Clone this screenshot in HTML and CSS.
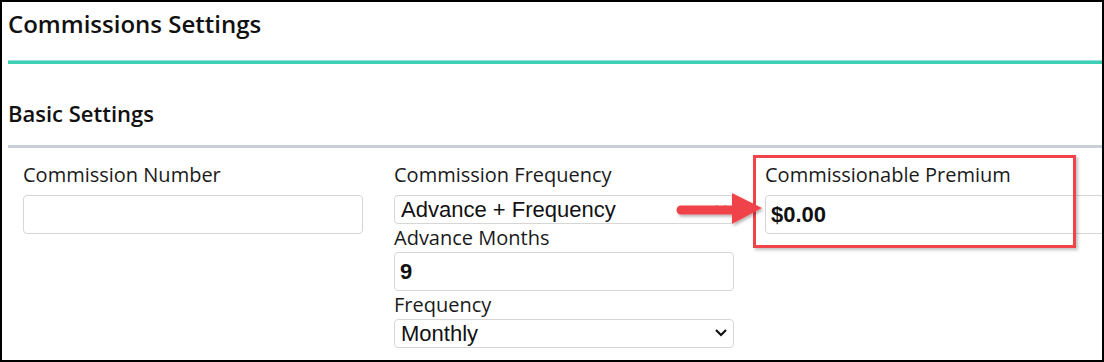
FILE: index.html
```html
<!DOCTYPE html>
<html lang="en">
<head>
    <meta charset="UTF-8">
    <title>Commissions Settings</title>
    <link rel="stylesheet" href="styles.css">
</head>
<body>
    <div class="frame">
        <h1 class="page-title">Commissions Settings</h1>
        <div class="rule-teal"></div>

        <h2 class="section-title">Basic Settings</h2>
        <div class="rule-gray"></div>

        <div class="fields">
            <div class="field-col">
                <label class="lbl first">Commission Number</label>
                <input class="txt" type="text" value="">
            </div>

            <div class="field-col">
                <label class="lbl first">Commission Frequency</label>
                <div class="sel-wrap">
                    <select class="sel">
                        <option>Advance + Frequency</option>
                    </select>
                    <svg class="chev" width="14" height="10" viewBox="0 0 14 10"><path d="M2 2 L7 7 L12 2" fill="none" stroke="#111" stroke-width="2.2"/></svg>
                </div>
                <label class="lbl">Advance Months</label>
                <input class="txt" type="text" value="9">
                <label class="lbl">Frequency</label>
                <div class="sel-wrap">
                    <select class="sel">
                        <option>Monthly</option>
                    </select>
                    <svg class="chev" width="14" height="10" viewBox="0 0 14 10"><path d="M2 2 L7 7 L12 2" fill="none" stroke="#111" stroke-width="2.2"/></svg>
                </div>
            </div>

            <div class="field-col">
                <label class="lbl first">Commissionable Premium</label>
                <input class="txt" type="text" value="$0.00">
            </div>

            <!-- callout drawn over the form -->
            <div class="callout-box"></div>
            <svg class="callout-arrow" width="100" height="40" viewBox="0 0 100 40">
                <defs>
                    <filter id="sh" x="-20%" y="-20%" width="140%" height="160%">
                        <feDropShadow dx="1.5" dy="2" stdDeviation="1.5" flood-color="#000" flood-opacity="0.3"/>
                    </filter>
                </defs>
                <g filter="url(#sh)" fill="#f0434a">
                    <line x1="15" y1="20" x2="70" y2="20" stroke="#f0434a" stroke-width="9" stroke-linecap="round"/>
                    <polygon points="66,3 96,18 66,34"/>
                </g>
            </svg>
        </div>
    </div>
</body>
</html>
```

FILE: styles.css
```css
body {
    margin: 0;
    background: #fff;
}
.frame {
    width: 1104px;
    height: 362px;
    box-sizing: border-box;
    border: 2px solid #000;
    overflow: hidden;
    padding-left: 6px;
    font-family: 'Open Sans', sans-serif;
    color: #111;
}
.page-title {
    margin: 0;
    padding-top: 6px;
    font-size: 24px;
    line-height: 32px;
    font-weight: 600;
}
.rule-teal {
    margin-top: 20px;
    height: 3px;
    border-top: 1px solid #8fe2d3;
    background: #3fcfb5;
}
.section-title {
    margin: 34px 0 0;
    font-size: 22px;
    line-height: 30px;
    font-weight: 600;
}
.rule-gray {
    margin-top: 17px;
    height: 3px;
    background: #c9cfd6;
}
.fields {
    position: relative;
    display: grid;
    grid-template-columns: 340px 340px 340px;
    column-gap: 31px;
    padding: 14px 0 0 15px;
}
.field-col {
    display: flex;
    flex-direction: column;
    align-items: stretch;
}
.lbl {
    display: block;
    font-size: 20px;
    line-height: 26px;
    color: #1a1a1a;
    margin: 1px 0 1px;
}
.lbl.first {
    margin: 0 0 7px;
}
.txt {
    box-sizing: border-box;
    height: 39px;
    width: 340px;
    margin: 0;
    padding: 0 5px;
    border: 1px solid #d6d6d6;
    border-radius: 4px;
    font-family: 'Liberation Sans', Arial, sans-serif;
    font-size: 22px;
    font-weight: bold;
    color: #111;
    background: #fff;
    outline: none;
}
.sel-wrap {
    position: relative;
    width: 340px;
}
.sel {
    appearance: none;
    -webkit-appearance: none;
    box-sizing: border-box;
    display: block;
    width: 340px;
    height: 29px;
    margin: 0;
    padding: 0 6px;
    border: 1px solid #d6d6d6;
    border-radius: 4px;
    font-family: 'Liberation Sans', Arial, sans-serif;
    font-size: 22px;
    line-height: 27px;
    color: #111;
    background: #fff;
}
.chev {
    position: absolute;
    right: 6px;
    top: 9px;
}
.callout-box {
    position: absolute;
    left: 745px;
    top: 7px;
    width: 323px;
    height: 93px;
    box-sizing: border-box;
    border: 3px solid #f0434a;
    box-shadow: 2px 2px 3px rgba(0,0,0,0.25);
}
.callout-arrow {
    position: absolute;
    left: 658px;
    top: 42px;
}
```
